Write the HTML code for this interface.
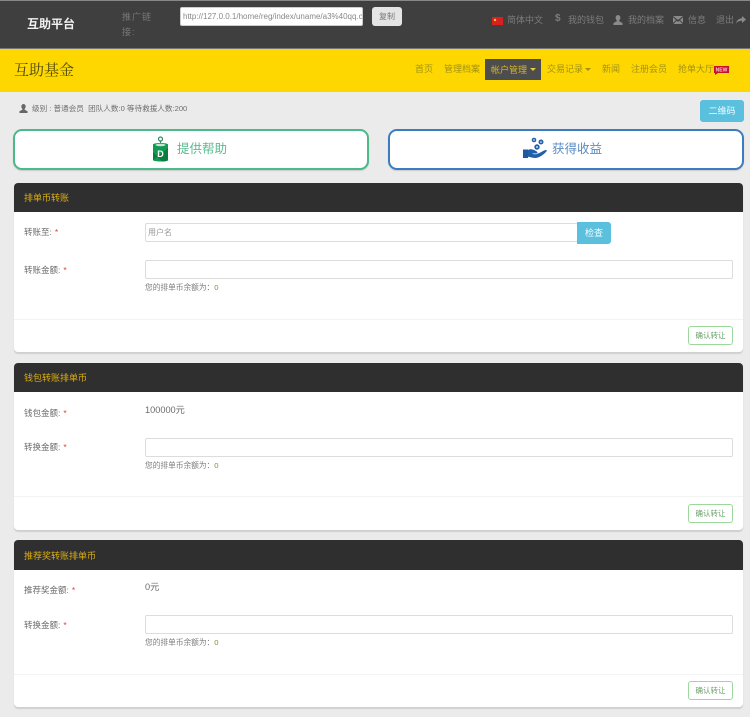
<!DOCTYPE html>
<html lang="zh"><head><meta charset="utf-8"><title>互助基金</title>
<style>
*{box-sizing:border-box}
html,body{margin:0;padding:0}
html{background:#ebebeb}
body{width:750px;height:717px;position:relative;overflow:hidden;background:#ebebeb;font-family:"Liberation Sans","Noto Sans CJK SC",sans-serif;color:#777;font-size:9px;filter:blur(.35px)}
.a{position:absolute;white-space:nowrap}
.card{position:absolute;left:14px;width:729px;background:#fff;border-radius:4px;box-shadow:0 2px 1px #d0d0d0}
.hd{position:absolute;left:0;top:0;width:100%;height:29px;background:#2f2f2f;border-radius:4px 4px 0 0;color:#dcae10;font-size:9px;line-height:31px;padding-left:10px}
.lb{position:absolute;left:10px;font-size:8.5px;color:#6c6c6c;white-space:nowrap;line-height:12px}
.lb i{color:#e04040;font-style:normal;margin-left:3px}
.ip{position:absolute;left:131px;width:588px;height:19px;background:#fff;border:1px solid #dcdcdc;border-radius:2px}
.nt{position:absolute;left:131px;font-size:7.7px;color:#7c7c7c;white-space:nowrap;line-height:12px}
.nt b{color:#7a9a30;font-weight:normal}
.ln{position:absolute;left:0;width:100%;height:1px;background:#f3f3f3}
.btn{position:absolute;left:674px;width:45px;height:19px;border:1px solid #9cd89c;border-radius:3px;background:#fff;color:#6aa06a;font-size:7.5px;line-height:17px;text-align:center}
.val{position:absolute;left:131px;font-size:9.2px;color:#6c6c6c;line-height:12px;white-space:nowrap}
.tn{position:absolute;top:62px;font-size:9px;line-height:14px;color:#a09214;white-space:nowrap}
.tp{position:absolute;top:14px;font-size:9px;line-height:12px;color:#7c7c7c;white-space:nowrap}
</style></head><body>
<div class="a" style="left:0;top:0;width:750px;height:49px;background:#3f3f3f;border-top:1px solid #888;border-bottom:1px solid #777"></div>
<div class="a" style="left:27px;top:16px;font-size:12px;font-weight:bold;color:#f2f2f2;line-height:16px">互助平台</div>
<div class="a" style="left:122px;top:10px;width:30px;white-space:normal;font-size:9px;line-height:15px;color:#777;letter-spacing:1px">推广链接:</div>
<div class="a" style="left:180px;top:7px;width:183px;height:19px;background:#fff;border:1px solid #ccc;border-radius:2px;font-size:8px;line-height:17px;color:#888;padding-left:2px;overflow:hidden">http://127.0.0.1/home/reg/index/uname/a3%40qq.co</div>
<div class="a" style="left:372px;top:7px;width:30px;height:19px;background:#e4e4e4;border-radius:3px;font-size:8px;line-height:19px;color:#777;text-align:center">复制</div>

<svg class="a" style="left:492px;top:17px" width="11" height="8"><rect width="11" height="8" fill="#d92020"/><circle cx="3" cy="3" r="1.2" fill="#f0d030"/></svg>
<div class="tp" style="left:507px">简体中文</div>
<div class="tp" style="left:555px;font-weight:bold;font-size:10px;top:13px">$</div>
<div class="tp" style="left:568px">我的钱包</div>
<svg class="a" style="left:613px;top:15px" width="10" height="10" viewBox="0 0 10 10"><path d="M5 0a2.400 2.600 0 0 1 2.400 2.800c0 1.200-.6 2.200-1.200 2.700v.8L9.500 8v2H.5V8l3.300-1.700v-.8C3.200 5 2.600 4 2.600 2.800A2.400 2.600 0 0 1 5 0z" fill="#8a8a8a"/></svg>
<div class="tp" style="left:628px">我的档案</div>
<svg class="a" style="left:673px;top:16px" width="10" height="8" viewBox="0 0 10 8"><path d="M0 0h10L5 4zM0 1.200V7l3-3zM10 1.200V7L7 4zM.5 8l3-3.300L5 5.800l1.500-1.100L9.500 8z" fill="#8a8a8a"/></svg>
<div class="tp" style="left:688px">信息</div>
<div class="tp" style="left:716px">退出</div>
<svg class="a" style="left:736px;top:16px" width="10" height="8" viewBox="0 0 10 8"><path d="M6 0l4 3.500L6 7V4.800C3.500 4.800 1.500 5.500 0 7.500.5 4.500 2.800 2.400 6 2.200z" fill="#8a8a8a"/></svg>

<div class="a" style="left:0;top:49px;width:750px;height:43px;background:#ffd700"></div>
<div class="a" style="left:14px;top:60px;font-family:'Liberation Serif','Noto Serif CJK SC',serif;font-size:15px;line-height:22px;color:#4c480a">互助基金</div>
<div class="tn" style="left:415px">首页</div>
<div class="tn" style="left:444px">管理档案</div>
<div class="a" style="left:485px;top:59px;width:56px;height:21px;background:#4d4d4d"></div>
<div class="tn" style="left:491px;top:63px;color:#d8b528">帐户管理</div>
<div class="a" style="left:530px;top:68px;border-left:3px solid transparent;border-right:3px solid transparent;border-top:3px solid #e8c840"></div>
<div class="tn" style="left:547px">交易记录</div>
<div class="a" style="left:585px;top:68px;border-left:3px solid transparent;border-right:3px solid transparent;border-top:3px solid #a09214"></div>
<div class="tn" style="left:602px">新闻</div>
<div class="tn" style="left:631px">注册会员</div>
<div class="tn" style="left:678px">抢单大厅</div>
<svg class="a" style="left:713px;top:66px" width="16" height="9"><rect x="1" y="0" width="15" height="7" fill="#c8102e"/><path d="M2 7v2l3-2z" fill="#c8102e"/><text x="8.500" y="5.500" font-size="5" font-weight="bold" fill="#f6c8c8" text-anchor="middle" font-family="Liberation Sans">NEW</text></svg>

<svg class="a" style="left:19px;top:104px" width="9" height="9" viewBox="0 0 10 10"><path d="M5 0a2.400 2.600 0 0 1 2.400 2.800c0 1.200-.6 2.200-1.200 2.700v.8L9.500 8v2H.5V8l3.300-1.700v-.8C3.200 5 2.600 4 2.600 2.800A2.400 2.600 0 0 1 5 0z" fill="#666"/></svg>
<div class="a" style="left:32px;top:103px;font-size:7.6px;line-height:12px;color:#6e6e6e">级别 : 普通会员&nbsp; 团队人数:0 等待救援人数:200</div>
<div class="a" style="left:700px;top:100px;width:44px;height:22px;background:#5bc0de;border-radius:3px;color:#f2fbfd;font-size:9px;line-height:22px;text-align:center">二维码</div>

<div class="a" style="left:13px;top:129px;width:356px;height:41px;background:#fff;border:2px solid #4cb988;border-radius:9px;box-shadow:0 1px 1px #ccc"></div>
<svg class="a" style="left:152px;top:136px" width="17" height="26" viewBox="0 0 17 26"><circle cx="8.500" cy="3" r="2" fill="none" stroke="#2f8a5f" stroke-width="1.200"/><path d="M8.500 5v3" stroke="#2f8a5f"/><path d="M1 8.500C1 6.500 16 6.500 16 8.500V24c0 2-15 2-15 0z" fill="#129a52"/><path d="M16 12V24c0 1-3 1.500-6 1.500L1 16v8" fill="#0b7c40"/><ellipse cx="8.500" cy="9" rx="5" ry="1.200" fill="#c7e8d4"/><text x="8.500" y="21" font-size="9" font-weight="bold" fill="#fff" text-anchor="middle" font-family="Liberation Sans">D</text></svg>
<div class="a" style="left:177px;top:139px;font-size:12.5px;line-height:20px;color:#58bb8f">提供帮助</div>

<div class="a" style="left:388px;top:129px;width:356px;height:41px;background:#fff;border:2px solid #3d7cc0;border-radius:9px;box-shadow:0 1px 1px #ccc"></div>
<svg class="a" style="left:523px;top:137px" width="24" height="23" viewBox="0 0 24 23"><circle cx="11" cy="3" r="2.300" fill="#2060a8"/><circle cx="18" cy="5" r="2.500" fill="#2060a8"/><circle cx="14" cy="10" r="2.700" fill="#2060a8"/><circle cx="11" cy="3" r=".8" fill="#fff"/><circle cx="18" cy="5" r=".8" fill="#fff"/><circle cx="14" cy="10" r=".9" fill="#fff"/><path d="M0 12.500h5V21H0z" fill="#1e5a9e"/><path d="M5 13c3-1.500 5-.5 8 1 2 1 2 2.500 0 2.500H9c2 1 4 1 6 0 3-1 6-3.500 8-3.500 1 0 1 1 0 2-3 3-7 6-11 6-3 0-5-1-7-1.200z" fill="#2060a8"/></svg>
<div class="a" style="left:552px;top:139px;font-size:12.5px;line-height:20px;color:#5a8cc4">获得收益</div>

<div class="card" style="top:183px;height:169px">
  <div class="hd">排单币转账</div>
  <div class="lb" style="top:43px">转账至:<i>*</i></div>
  <div class="ip" style="top:40px;width:433px;font-size:8px;line-height:17px;color:#999;padding-left:2px">用户名</div>
  <div class="a" style="left:563px;top:39px;width:34px;height:22px;background:#5bc0de;border-radius:0 3px 3px 0;color:#f2fbfd;font-size:9px;line-height:22px;text-align:center">检查</div>
  <div class="lb" style="top:81px">转账金额:<i>*</i></div>
  <div class="ip" style="top:77px"></div>
  <div class="nt" style="top:99px">您的排单币余额为：<b>0</b></div>
  <div class="ln" style="top:136px"></div>
  <div class="btn" style="top:143px">确认转让</div>
</div>

<div class="card" style="top:363px;height:167px">
  <div class="hd">钱包转账排单币</div>
  <div class="lb" style="top:44px">钱包金额:<i>*</i></div>
  <div class="val" style="top:41px">100000元</div>
  <div class="lb" style="top:78px">转换金额:<i>*</i></div>
  <div class="ip" style="top:75px"></div>
  <div class="nt" style="top:97px">您的排单币余额为：<b>0</b></div>
  <div class="ln" style="top:133px"></div>
  <div class="btn" style="top:141px">确认转让</div>
</div>

<div class="card" style="top:540px;height:167px">
  <div class="hd" style="height:30px;line-height:33px">推荐奖转账排单币</div>
  <div class="lb" style="top:44px">推荐奖金额:<i>*</i></div>
  <div class="val" style="top:41px">0元</div>
  <div class="lb" style="top:79px">转换金额:<i>*</i></div>
  <div class="ip" style="top:75px"></div>
  <div class="nt" style="top:97px">您的排单币余额为：<b>0</b></div>
  <div class="ln" style="top:134px"></div>
  <div class="btn" style="top:141px">确认转让</div>
</div>
</body></html>
